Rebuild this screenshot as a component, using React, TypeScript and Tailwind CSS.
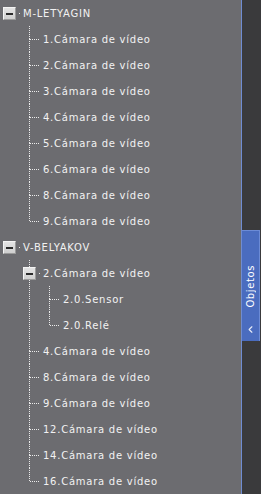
import { ChevronLeft } from "lucide-react";

type TNode = { label: string; children?: TNode[] };

const cams = (nums: string[]) => nums.map((n) => ({ label: `${n}.Cámara de vídeo` }));

const tree: TNode[] = [
  { label: "M-LETYAGIN", children: cams(["1", "2", "3", "4", "5", "6", "8", "9"]) },
  {
    label: "V-BELYAKOV",
    children: [
      {
        label: "2.Cámara de vídeo",
        children: [{ label: "2.0.Sensor" }, { label: "2.0.Relé" }],
      },
      ...cams(["4", "8", "9", "12", "14", "16"]),
    ],
  },
];

type TRow = { label: string; depth: number; last: boolean; open: boolean; guides: boolean[] };

const flatten = (nodes: TNode[], depth = 0, guides: boolean[] = []): TRow[] =>
  nodes.flatMap((n, i) => {
    const last = i === nodes.length - 1;
    const row: TRow = { label: n.label, depth, last, open: !!n.children, guides };
    const kids = n.children ? flatten(n.children, depth + 1, [...guides, !last]) : [];
    return [row, ...kids];
  });

const vLine =
  "w-px bg-[repeating-linear-gradient(to_bottom,#ececec_0_1px,transparent_1px_2px)]";
const hLine =
  "h-px bg-[repeating-linear-gradient(to_right,#ececec_0_1px,transparent_1px_2px)]";

const Toggle = () => (
  <div className="w-[13px] h-[13px] flex items-center justify-center bg-gradient-to-b from-[#e4e4e4] to-[#cfcfcf] border border-t-[#f4f4f4] border-l-[#f4f4f4] border-b-[#9a9a9a] border-r-[#9a9a9a]">
    <div className="w-[7px] h-[2px] bg-[#2a2a2a]" />
  </div>
);

const Row = ({ row }: { row: TRow }) => {
  // guides[0] belongs to the root level, which draws no line
  const cols = row.guides.slice(1);
  return (
    <div className="h-[26px] flex pl-[3px]">
      {row.depth > 0 && <div className="w-[20px] shrink-0" />}
      {cols.map((g, i) => (
        <div key={i} className="w-[20px] shrink-0 flex">
          <div className="w-[6px]" />
          {g && <div className={`${vLine} h-full`} />}
        </div>
      ))}
      <div className="w-[20px] shrink-0 flex">
        {row.open ? (
          <div className="w-[13px] flex flex-col items-center">
            {row.depth > 0 ? <div className={`${vLine} h-[7px]`} /> : <div className="h-[7px]" />}
            <Toggle />
            {row.depth > 0 && !row.last && <div className={`${vLine} flex-1`} />}
          </div>
        ) : (
          <div className="w-[13px] flex">
            <div className="w-[6px]" />
            <div className="flex flex-col">
              <div className={`${vLine} h-[13px]`} />
              {!row.last && <div className={`${vLine} flex-1`} />}
            </div>
            <div className="flex-1 flex flex-col">
              <div className="h-[13px]" />
              <div className={`${hLine} w-full`} />
            </div>
          </div>
        )}
        <div className="flex-1 flex flex-col">
          {row.open ? (
            <div className="h-[13px] pl-[3px] flex items-end">
              <div className="w-px h-px bg-[#ececec] mb-[-1px]" />
            </div>
          ) : (
            <>
              <div className="h-[13px]" />
              <div className={`${hLine} w-[4px]`} />
            </>
          )}
        </div>
      </div>
      <div className="flex items-center text-[10px] tracking-[0.75px] text-[#f2f2f2] whitespace-nowrap font-['DejaVu_Sans',sans-serif]">
        {row.label}
      </div>
    </div>
  );
};

export default function App() {
  const rows = flatten(tree);
  return (
    <div className="w-[261px] h-[494px] flex overflow-hidden">
      <div className="w-[241px] h-full bg-[#6c6c70] flex flex-col">
        {rows.map((r, i) => (
          <Row key={i} row={r} />
        ))}
      </div>
      <div className="w-[20px] h-full bg-[#3a3a3c] border-l border-[#6f8cd2]">
        <div className="mt-[230px] w-[18px] h-[111px] bg-[#4a6cbf] border-t border-r border-[#6c8bd6] flex flex-col items-center">
          <div className="mt-[34px] [writing-mode:vertical-rl] rotate-180 text-[10px] tracking-[0.6px] text-white font-['DejaVu_Sans',sans-serif] leading-none">
            Objetos
          </div>
          <ChevronLeft className="mt-auto mb-[6px] w-[11px] h-[11px] text-[#e8ecf8]" strokeWidth={2.5} />
        </div>
      </div>
    </div>
  );
}
